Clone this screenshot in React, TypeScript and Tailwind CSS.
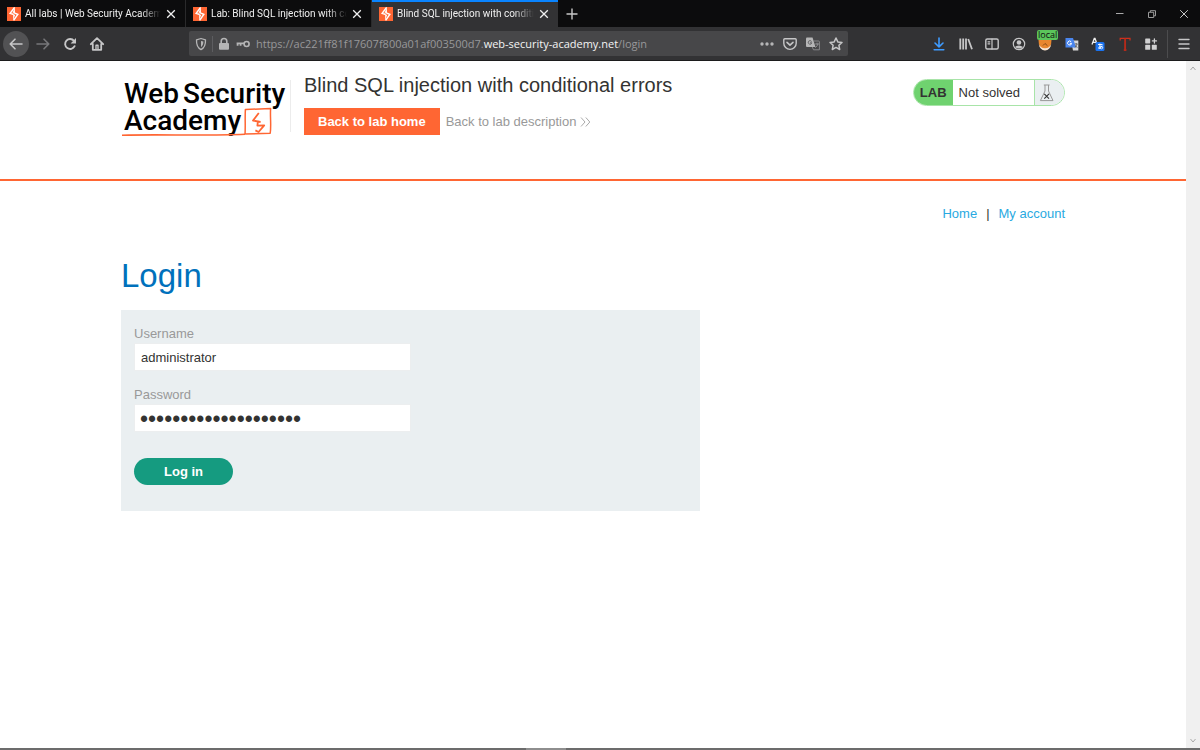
import type { ReactNode } from "react"

const tabs = [
  { title: "All labs | Web Security Academy", active: false },
  { title: "Lab: Blind SQL injection with conditional errors", active: false },
  { title: "Blind SQL injection with conditional errors", active: true },
]

function Favicon() {
  return (
    <svg viewBox="0 0 14 14" className="w-[14px] h-[14px] shrink-0" aria-hidden="true">
      <rect width="14" height="14" fill="#ff6633" />
      <path d="M7.6 0.4 L3.2 6.4 L6.8 7.5 M7.2 5.9 L10.8 7.4 L6.6 13.4" fill="none" stroke="#fff" strokeWidth="1.5" />
      <path d="M7.8 0.4 L8 6 L5.6 5.8 Z M6.2 8 L8.2 7.6 L6.2 13.4 Z" fill="#fff" />
    </svg>
  )
}

function Close() {
  return (
    <svg viewBox="0 0 10 10" className="w-[10px] h-[10px]" fill="none" stroke="#f0f0f0" strokeWidth="1.3" aria-hidden="true">
      <path d="M1.2 1.2 L8.8 8.8 M8.8 1.2 L1.2 8.8" />
    </svg>
  )
}

function Tab({ title, active }: { title: string; active: boolean }) {
  const look = active
    ? "bg-[#323234] border-t-2 border-[#0a84ff] pb-px"
    : "border-r border-r-[#2a2a2b] pt-px"
  return (
    <div className={`flex items-center w-[186px] h-full pl-[7px] pr-2 ${look}`}>
      <Favicon />
      <span className="flex-1 ml-1 mr-1 overflow-hidden whitespace-nowrap font-['Roboto',sans-serif] text-[10px] leading-4 text-[#f0f0f0] mask-r-from-85% mask-r-to-100%">
        {title}
      </span>
      <button aria-label="Close tab" className="p-px">
        <Close />
      </button>
    </div>
  )
}

function TabBar() {
  return (
    <div className="flex items-stretch h-[27px] bg-[#0c0c0d]">
      {tabs.map((tab) => (
        <Tab key={tab.title} {...tab} />
      ))}
      <button aria-label="New tab" className="px-2">
        <svg viewBox="0 0 12 12" className="w-3 h-3" stroke="#c8c8c8" strokeWidth="1.4">
          <path d="M6 0.5 V11.5 M0.5 6 H11.5" />
        </svg>
      </button>
      <div className="flex items-center gap-[22px] ml-auto pr-[11px]">
        <button aria-label="Minimize">
          <svg viewBox="0 0 10 10" className="w-[10px] h-[10px]" stroke="#aaa">
            <path d="M1 4.5 H8.5" />
          </svg>
        </button>
        <button aria-label="Restore">
          <svg viewBox="0 0 10 10" className="w-[10px] h-[10px]" fill="none" stroke="#aaa" strokeWidth="0.9">
            <path d="M1.5 3.3 H6.7 V8.5 H1.5 Z M3.3 3 V1.7 H8.5 V6.8 H7" />
          </svg>
        </button>
        <button aria-label="Close window">
          <svg viewBox="0 0 10 10" className="w-[10px] h-[10px]" stroke="#ddd" strokeWidth="0.9">
            <path d="M1.2 1.2 L8.8 8.8 M8.8 1.2 L1.2 8.8" />
          </svg>
        </button>
      </div>
    </div>
  )
}

function ToolButton({ label, children }: { label: string; children: ReactNode }) {
  return (
    <button aria-label={label} className="relative flex items-center justify-center w-[26px] h-[26px] shrink-0">
      {children}
    </button>
  )
}

function Icon({ children }: { children: ReactNode }) {
  return (
    <svg
      viewBox="0 0 16 16"
      className="w-4 h-4 shrink-0"
      fill="none"
      stroke="#c6c6c7"
      strokeWidth="1.6"
      strokeLinecap="round"
      strokeLinejoin="round"
      aria-hidden="true"
    >
      {children}
    </svg>
  )
}

function AddressBar() {
  return (
    <div className="flex items-center flex-1 h-[25px] ml-[79px] mr-[78px] px-1 rounded-xs bg-[#474749]">
      <Icon>
        <path d="M8 2.5 L12.5 3.8 C12.7 8.5 11.5 12 8 13.6 C4.5 12 3.3 8.5 3.5 3.8 Z" strokeWidth="1.3" stroke="#b5b5b6" />
        <path d="M8 5 L10.4 5.6 C10.4 8.2 9.7 10 8 11.2 Z" fill="#b5b5b6" stroke="none" />
      </Icon>
      <span className="w-px h-4 mx-[3px] bg-[#5d5d60]" />
      <Icon>
        <rect x="3" y="7" width="10" height="6.8" rx="1" fill="#b5b5b6" stroke="none" />
        <path d="M5.2 7.5 V5.3 A2.8 2.8 0 0 1 10.8 5.3 V7.5" stroke="#b5b5b6" />
      </Icon>
      <span className="ml-[3px]">
        <Icon>
          <circle cx="11.6" cy="8" r="2.5" stroke="#b5b5b6" strokeWidth="1.6" />
          <path d="M9 7.4 H1.6 M2.6 7.6 V9.8 M5.6 7.6 V9.8" stroke="#b5b5b6" strokeWidth="1.8" strokeLinecap="butt" />
        </Icon>
      </span>
      <span className="flex-1 ml-[5px] whitespace-nowrap text-[11px] leading-4 text-[#98989a]">
        https://ac221ff81f17607f800a01af003500d7.
        <span className="text-[#f4f4f4]">web-security-academy.net</span>/login
      </span>
      <div className="flex gap-[7px]">
        <button aria-label="Page actions">
          <Icon>
            <g fill="#b5b5b6" stroke="none">
              <circle cx="3" cy="8" r="1.7" />
              <circle cx="8" cy="8" r="1.7" />
              <circle cx="13" cy="8" r="1.7" />
            </g>
          </Icon>
        </button>
        <button aria-label="Save to Pocket">
          <Icon>
            <path d="M2.8 2.7 H13.2 Q14.2 2.7 14.2 3.7 V7.2 A6.2 6.2 0 0 1 1.8 7.2 V3.7 Q1.8 2.7 2.8 2.7 Z" strokeWidth="1.4" />
            <path d="M5 6.4 L8 9.2 L11 6.4" strokeWidth="1.6" />
          </Icon>
        </button>
        <button aria-label="Translate page">
          <Icon>
            <path d="M2 1.5 H7.5 L10.5 11 H2 Q1 11 1 10 V2.5 Q1 1.5 2 1.5 Z" fill="#b5b5b6" stroke="none" />
            <path d="M9 5 H13.5 Q14.4 5 14.4 6 V13.8 H8.5 L7.5 11.5" stroke="#88888a" strokeWidth="1" />
            <path d="M6.4 5.2 A1.8 1.8 0 1 0 6.8 6.8 H5.4" stroke="#5b5b5d" strokeWidth="0.9" />
            <path d="M10.3 8 H13.5 M12 7 V8 M13 8 Q12.3 10.5 10.5 11.5" stroke="#98989a" strokeWidth="0.8" />
          </Icon>
        </button>
        <button aria-label="Bookmark this page">
          <Icon>
            <path d="M8 2 L9.8 5.9 L14 6.4 L10.9 9.3 L11.7 13.5 L8 11.4 L4.3 13.5 L5.1 9.3 L2 6.4 L6.2 5.9 Z" strokeWidth="1.5" />
          </Icon>
        </button>
      </div>
    </div>
  )
}

function Toolbar() {
  return (
    <div className="flex items-center h-[34px] px-[3px] bg-[#323234] border-b border-[#1c1c1d]">
      <div className="flex items-center gap-px">
        <button aria-label="Back" className="flex items-center justify-center w-[26px] h-[26px] rounded-full bg-[#525254]">
          <Icon>
            <path d="M14 8 H2.2 M7 3.2 L2.2 8 L7 12.8" />
          </Icon>
        </button>
        <ToolButton label="Forward">
          <Icon>
            <path d="M2 8 H13.8 M9 3.2 L13.8 8 L9 12.8" stroke="#77777a" />
          </Icon>
        </ToolButton>
        <ToolButton label="Reload">
          <Icon>
            <path d="M12.6 10.2 A5 5 0 1 1 12 4.8" strokeWidth="1.9" />
            <path d="M14 2 V7.4 H8.6 Z" fill="#c6c6c7" stroke="none" />
          </Icon>
        </ToolButton>
        <ToolButton label="Home">
          <Icon>
            <path d="M1.8 8.2 L8 2.2 L14.2 8.2 M3.8 7.8 V13.8 H12.2 V7.8" strokeWidth="1.8" />
            <path d="M7 13.5 V9.2 H9 V13.5" strokeWidth="1.4" />
          </Icon>
        </ToolButton>
      </div>
      <AddressBar />
      <div className="flex items-center justify-between w-[238px]">
        <ToolButton label="Downloads">
          <Icon>
            <path d="M8 2 V10.5 M4 7 L8 10.8 L12 7 M3.2 13.8 H12.8" stroke="#3e9bff" />
          </Icon>
        </ToolButton>
        <ToolButton label="Library">
          <Icon>
            <path d="M2.3 2.5 V13.5 M5.2 2.5 V13.5 M8 2.5 V13.5 M10.2 3 L14 13.2" strokeLinecap="butt" strokeWidth="1.8" />
          </Icon>
        </ToolButton>
        <ToolButton label="Sidebars">
          <Icon>
            <rect x="1.8" y="3" width="12.4" height="10" rx="1.5" strokeWidth="1.4" />
            <path d="M8 3 V13 M4 5.8 H5.8 M4 7.8 H5.8" strokeWidth="1.2" />
          </Icon>
        </ToolButton>
        <ToolButton label="Account">
          <Icon>
            <circle cx="8" cy="8" r="5.7" strokeWidth="1.2" />
            <circle cx="8" cy="6.5" r="2.3" fill="#c6c6c7" stroke="none" />
            <path d="M4 11 Q8 7.8 12 11 Q8 14 4 11 Z" fill="#c6c6c7" stroke="none" />
          </Icon>
        </ToolButton>
        <ToolButton label="FoxyProxy">
          <svg viewBox="0 0 16 16" className="w-4 h-4" aria-hidden="true">
            <path d="M1.5 4 H14.5 Q14.5 13.5 8 14.2 Q1.5 13.5 1.5 4 Z" fill="#e8862e" />
            <path d="M1.8 8.5 Q3 14 8 14.4 Q13 14 14.2 8.5 Q12 12.4 8 12.2 Q4 12.4 1.8 8.5 Z" fill="#f5e3d2" />
            <path d="M6 9.5 L8 7.5 L10.5 9.8" fill="none" stroke="#8a4a14" />
          </svg>
          <span className="absolute -top-px left-[5px] px-px rounded-xs bg-[#5bc55b] text-[9px] leading-[10px] text-[#101010]">
            local
          </span>
        </ToolButton>
        <ToolButton label="Google Translate">
          <svg viewBox="0 0 16 16" className="w-4 h-4" aria-hidden="true">
            <path d="M7 4.5 H14.3 V14.5 H9 Z" fill="#d8d8d8" />
            <path d="M1.5 2 H9 L12 11.5 H1.5 Z" fill="#4a86ee" />
            <path d="M7.2 5.8 A2 2 0 1 0 7.6 7.4 H5.8" fill="none" stroke="#fff" />
            <path d="M10.8 8 H13.6 M12.2 7 V8 M13.2 8 L11 11.5 M11.5 9.5 L13.3 11.8" fill="none" stroke="#555" strokeWidth="0.8" />
          </svg>
        </ToolButton>
        <ToolButton label="Translator">
          <svg viewBox="0 0 16 16" className="w-4 h-4" aria-hidden="true">
            <path d="M2 8.5 L4.3 2.4 H5 L7.2 8.5 M2.9 6.4 H6.4" fill="none" stroke="#eee" strokeWidth="1.3" />
            <rect x="5.5" y="6" width="9" height="9" rx="1.5" fill="#1a73f0" />
            <path d="M8 8.5 H12.5 M9.9 7.5 Q9.6 11.5 10.6 12.8 M12 9.6 Q10.5 13 8.8 12.6 Q8 11.2 10.5 10.4 Q13 10 12.7 11.8 Q12.3 12.9 11.4 13" fill="none" stroke="#fff" strokeWidth="0.9" />
          </svg>
        </ToolButton>
        <ToolButton label="Text tool">
          <svg viewBox="0 0 16 16" className="w-4 h-4" aria-hidden="true">
            <path d="M3.2 4.4 V2.4 H13 V4.4" fill="none" stroke="#d0301c" strokeWidth="1.2" />
            <path d="M8.1 2.6 V14 M6.8 14 H9.4" fill="none" stroke="#b42a1a" strokeWidth="1.9" />
          </svg>
        </ToolButton>
        <ToolButton label="Extensions">
          <Icon>
            <g fill="#d0d0d1" stroke="none">
              <rect x="2.2" y="2.4" width="5" height="5" rx="0.6" />
              <rect x="2.2" y="8.8" width="5" height="5" rx="0.6" />
              <rect x="8.8" y="8.8" width="5" height="5" rx="0.6" />
            </g>
            <path d="M11.4 2.9 V7 M9.4 4.9 H13.5" stroke="#d0d0d1" strokeWidth="1.3" />
          </Icon>
        </ToolButton>
      </div>
      <span className="w-px h-7 mx-[3px] bg-[#4c4c4e]" />
      <ToolButton label="Open menu">
        <Icon>
          <path d="M3 3.5 H13 M3 8 H13 M3 12.5 H13" strokeWidth="1.4" />
        </Icon>
      </ToolButton>
    </div>
  )
}

function Logo() {
  return (
    <svg viewBox="0 0 168 64" className="w-[168px] h-16" role="img" aria-label="Web Security Academy">
      <g fill="#000" fontFamily="Roboto, sans-serif" fontWeight="500" fontSize="28">
        <text x="3" y="27">Web</text>
        <text x="62" y="27">Security</text>
        <text x="3" y="54">Academy</text>
      </g>
      <g fill="none" stroke="#ff6633" strokeLinejoin="round">
        <path d="M1 59.2 C40 58.2 85 60 124 58.2" strokeWidth="1.6" />
        <path d="M124 58.4 C124.6 50 123.8 42 124.4 33.4 L149.6 32.6 C149 41 150.4 50 149.2 57.2 L123.6 58" strokeWidth="1.5" />
        <path d="M137.8 37 L132 44.6 L139.6 46 M137 44.5 L136.4 49.6 L143.2 49.4 L137.6 56 L134.4 54.4" strokeWidth="1.8" />
      </g>
    </svg>
  )
}

function LabStatus() {
  return (
    <div className="flex items-stretch h-[27px] rounded-full overflow-hidden border border-[#a8e4a8] text-[13px] leading-[25px] text-[#333332]">
      <span className="px-[6px] bg-[#6fd26f] font-bold">LAB</span>
      <span className="pl-[6px] pr-[14px]">Not solved</span>
      <span className="flex items-center w-[30px] pl-1 bg-[#eaeff1] border-l border-[#a8e4a8]">
        <svg viewBox="0 0 16 18" className="w-4 h-[18px]" fill="none" aria-hidden="true">
          <path d="M4.8 1 H10.6 M6 1 V7 L1.4 16.6 H14 L9.5 7 V1" stroke="#999" />
          <path d="M5.3 9.8 L10 14.6 M10 9.8 L5.3 14.6" stroke="#333" strokeWidth="1.1" />
        </svg>
      </span>
    </div>
  )
}

function LabHeader() {
  return (
    <header className="h-[120px] pt-3 border-b-2 border-[#ff6633]">
      <div className="flex items-start max-w-[944px] mx-auto">
        <a href="#academy" className="mt-[3px]">
          <Logo />
        </a>
        <span className="w-px h-[52px] mt-[7px] ml-px mr-[13px] bg-[#ececec]" />
        <div>
          <h2 className="text-[20px] leading-6 text-[#333332]">Blind SQL injection with conditional errors</h2>
          <div className="flex items-center mt-[11px] text-[13px]">
            <a href="#lab" className="px-[14px] leading-[27px] bg-[#ff6633] font-bold text-white">
              Back to lab home
            </a>
            <a href="#description" className="flex items-center gap-1 ml-[6px] text-[#999]">
              Back to lab description
              <svg viewBox="0 0 11 10" className="w-[11px] h-[10px]" fill="none" stroke="#aaa" aria-hidden="true">
                <path d="M1 0.5 L5 5 L1 9.5 M5.8 0.5 L9.8 5 L5.8 9.5" />
              </svg>
            </a>
          </div>
        </div>
        <div className="ml-auto mt-[6px]">
          <LabStatus />
        </div>
      </div>
    </header>
  )
}

function LoginForm() {
  return (
    <form className="max-w-[579px] mt-[14px] px-[13px] pt-[14px] pb-[26px] bg-[#eaeff1] text-[13px]" onSubmit={(e) => e.preventDefault()}>
      <label htmlFor="username" className="block leading-[19px] text-[#999]">
        Username
      </label>
      <input
        id="username"
        type="text"
        defaultValue="administrator"
        className="block w-full max-w-[277px] h-7 px-[6px] bg-white border border-[#eceeef] text-[#333332]"
      />
      <label htmlFor="password" className="block mt-[14px] leading-[19px] text-[#999]">
        Password
      </label>
      <input
        id="password"
        type="password"
        defaultValue="aaaaaaaaaaaaaaaaaaaa"
        className="block w-full max-w-[277px] h-7 px-[5px] pt-[2px] bg-white border border-[#eceeef] text-[23px] text-[#333332]"
      />
      <button type="submit" className="block mt-[26px] h-[27px] px-[30px] rounded-full bg-[#159b80] font-bold text-white">
        Log in
      </button>
    </form>
  )
}

function Scrollbar() {
  return (
    <div className="flex flex-col justify-between items-center w-[14px] py-[5px] bg-[#f0f0f0]" aria-hidden="true">
      <svg viewBox="0 0 6 5" className="w-[6px] h-[5px]" fill="none" stroke="#a8a8a8">
        <path d="M0.5 4 L3 1 L5.5 4" />
      </svg>
      <svg viewBox="0 0 6 5" className="w-[6px] h-[5px]" fill="none" stroke="#a8a8a8">
        <path d="M0.5 1 L3 4 L5.5 1" />
      </svg>
    </div>
  )
}

export default function App() {
  return (
    <div className="flex flex-col min-h-screen bg-white font-['Open_Sans',sans-serif]">
      <TabBar />
      <Toolbar />
      <div className="flex flex-1 font-['Liberation_Sans',Arial,sans-serif]">
        <main className="flex-1">
          <LabHeader />
          <section className="max-w-[944px] mx-auto">
            <nav className="flex justify-end gap-[9px] pt-[23px] text-[13px] leading-5 text-[#333332]">
              <a href="#home" className="text-[#29a9e1]">Home</a>
              <span>|</span>
              <a href="#account" className="text-[#29a9e1]">My account</a>
            </nav>
            <h1 className="mt-8 text-[33px] leading-10 text-[#0071bc]">Login</h1>
            <LoginForm />
          </section>
        </main>
        <Scrollbar />
      </div>
      <div className="flex justify-center h-[2px] bg-[#6c6c6c]">
        <span className="w-10 mr-[108px] bg-[#8e8e8e]" />
      </div>
    </div>
  )
}
